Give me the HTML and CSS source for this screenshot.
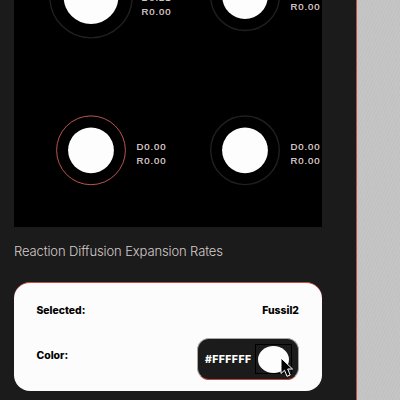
FILE: index.html
```
<!DOCTYPE html>
<html lang="en">
<head>
<meta charset="utf-8">
<title>Reaction Diffusion</title>
<link rel="stylesheet" href="styles.css">
</head>
<body>
<main class="sidebar">
  <svg class="graph" width="308" height="227" viewBox="14 0 308 227">
    <g class="ring">
      <circle cx="91" cy="-3.3" r="41.2"/>
      <circle cx="245" cy="-3.8" r="34.3"/>
      <circle class="active" cx="91" cy="150.3" r="34.4"/>
      <circle cx="245" cy="150.3" r="34.3"/>
    </g>
    <g class="disc">
      <circle cx="91" cy="-3.3" r="27.4"/>
      <circle cx="245" cy="-3.8" r="22.8"/>
      <circle cx="91" cy="150.3" r="22.9"/>
      <circle cx="245" cy="150.3" r="22.9"/>
    </g>
    <g class="rate">
      <text x="141.5" y="1.4" textLength="29">D0.21</text>
      <text x="141.5" y="15" textLength="29">R0.00</text>
      <text x="290.5" y="10.2" textLength="29">R0.00</text>
      <text x="136.5" y="150.4" textLength="29">D0.00</text>
      <text x="136.5" y="164.2" textLength="29">R0.00</text>
      <text x="290.5" y="150.4" textLength="29">D0.00</text>
      <text x="290.5" y="164.2" textLength="29">R0.00</text>
    </g>
  </svg>
  <h1 class="title">Reaction Diffusion Expansion Rates</h1>
  <section class="panel">
    <div class="row">
      <span>Selected:</span>
      <span class="name">Fussil2</span>
    </div>
    <div class="row color-row">
      <span>Color:</span>
      <div class="picker">
        <span class="hex">#FFFFFF</span>
        <span class="well"><span class="swatch"></span></span>
        <svg class="cursor" width="14" height="22" viewBox="0 0 14 22">
          <path d="M1 1V16.5L4.5 13.2L7 19.3L10.2 18L7.7 12H12.5Z"/>
        </svg>
      </div>
    </div>
  </section>
</main>
<aside class="stage"></aside>
</body>
</html>
```
FILE: styles.css
```
* { box-sizing: border-box; }
body {
  margin: 0;
  height: 400px;
  display: flex;
  overflow: hidden;
  background: #1b1b1b;
  font-family: "Liberation Sans", Arial, sans-serif;
}
.sidebar {
  width: 356px;
  padding-left: 14px;
}
.graph {
  display: block;
  background: #000;
}
.ring circle { fill: none; stroke: #202020; stroke-width: 1.4; }
.ring .active { stroke: #b8564a; stroke-width: 1; }
.disc circle { fill: #fdfdfd; }
.rate { fill: #e2dad9; font-size: 9.5px; stroke: #e2dad9; stroke-width: .2; }
.title {
  margin: 15px 0 0;
  height: 40px;
  font: 300 13px/19px Inter, sans-serif;
  letter-spacing: -.12px;
  white-space: nowrap;
  color: #d4cccb;
}
.panel {
  width: 308px;
  height: 109px;
  padding: 20px 23px 0 22.5px;
  border-top: 1px solid #c94b3e;
  border-radius: 16px;
  background: #fcfcfc;
  color: #000;
  font: 800 10.4px/16px Inter, sans-serif;
}
.row {
  display: flex;
  justify-content: space-between;
}
.color-row { margin-top: 19px; }
.color-row > span { margin-top: 10px; }
.picker {
  position: relative;
  display: flex;
  align-items: center;
  width: 102px;
  height: 42px;
  padding-left: 7px;
  border: 1px solid #a7a7a7;
  border-bottom-color: #b8483e;
  border-radius: 12px;
  background: #1b1b1b;
}
.hex { width: 50px; padding-top: 2px; color: #fff; letter-spacing: .45px; }
.well {
  display: grid;
  place-items: center;
  width: 37px;
  height: 30px;
  border: 1px solid #000;
}
.swatch {
  width: 31px;
  height: 27px;
  border-radius: 50%;
  background: #fdfdfd;
}
.cursor {
  position: absolute;
  left: 82px;
  top: 18px;
  fill: #000;
  stroke: #fff;
}
.stage {
  width: 44px;
  border-left: 1px solid #c94b3e;
  background: repeating-linear-gradient(115deg, #c1c1c1 0 1px, #c5c5c5 1px 3px);
}
```
